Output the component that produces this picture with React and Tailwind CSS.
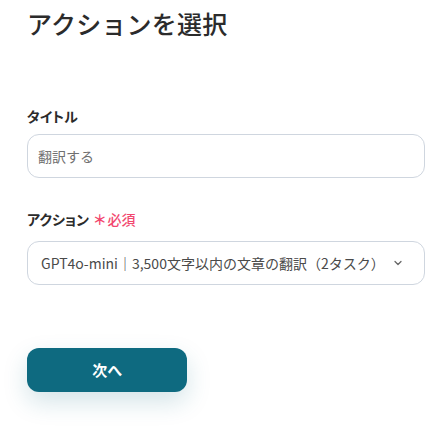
export default function App() {
  return (
    <div className="w-[448px] h-[435px] bg-white overflow-hidden font-['Noto_Sans_CJK_JP','Noto_Sans',sans-serif] text-[#333]">
      <div className="pl-[27px] pr-[23px]">
        <h1 className="pt-[6px] text-[25px] leading-[34px] font-medium tracking-[0.2px] text-[#2b2b2b]">アクションを選択</h1>

        <div className="mt-[66px] text-[14px] leading-[20px] font-bold text-[#2b2b2b] [font-feature-settings:'palt']">タイトル</div>
        <div className="mt-[8px] h-[44px] rounded-[12px] border border-[#cfd6df] flex items-center px-[10px]">
          <span className="text-[14px] text-[#707070]">翻訳する</span>
        </div>

        <div className="mt-[31px] flex items-center text-[14px] leading-[20px] font-bold [font-feature-settings:'palt']">
          <span className="text-[#2b2b2b]">アクション</span>
          <span className="ml-[5px] text-[#f2476f]">＊</span>
          <span className="ml-[2px] text-[#f2476f] font-medium">必須</span>
        </div>
        <div className="mt-[12px] h-[44px] rounded-[12px] border border-[#cfd6df] flex items-center pl-[13px] pr-[20px]">
          <span className="flex-1 text-[14px] text-[#4a4a4a]">GPT4o-mini｜3,500文字以内の文章の翻訳（2タスク）</span>
          <svg width="12" height="12" viewBox="0 0 24 24" fill="none" stroke="#666" strokeWidth="2.5" strokeLinecap="round" strokeLinejoin="round"><path d="M6 9l6 6 6-6" /></svg>
        </div>

        <button className="mt-[63px] w-[160px] h-[44px] rounded-[12px] bg-[#0e6a80] text-white text-[15px] font-bold shadow-[0_10px_25px_rgba(14,106,128,0.18)] [font-feature-settings:'palt']">次へ</button>
      </div>
    </div>
  );
}
